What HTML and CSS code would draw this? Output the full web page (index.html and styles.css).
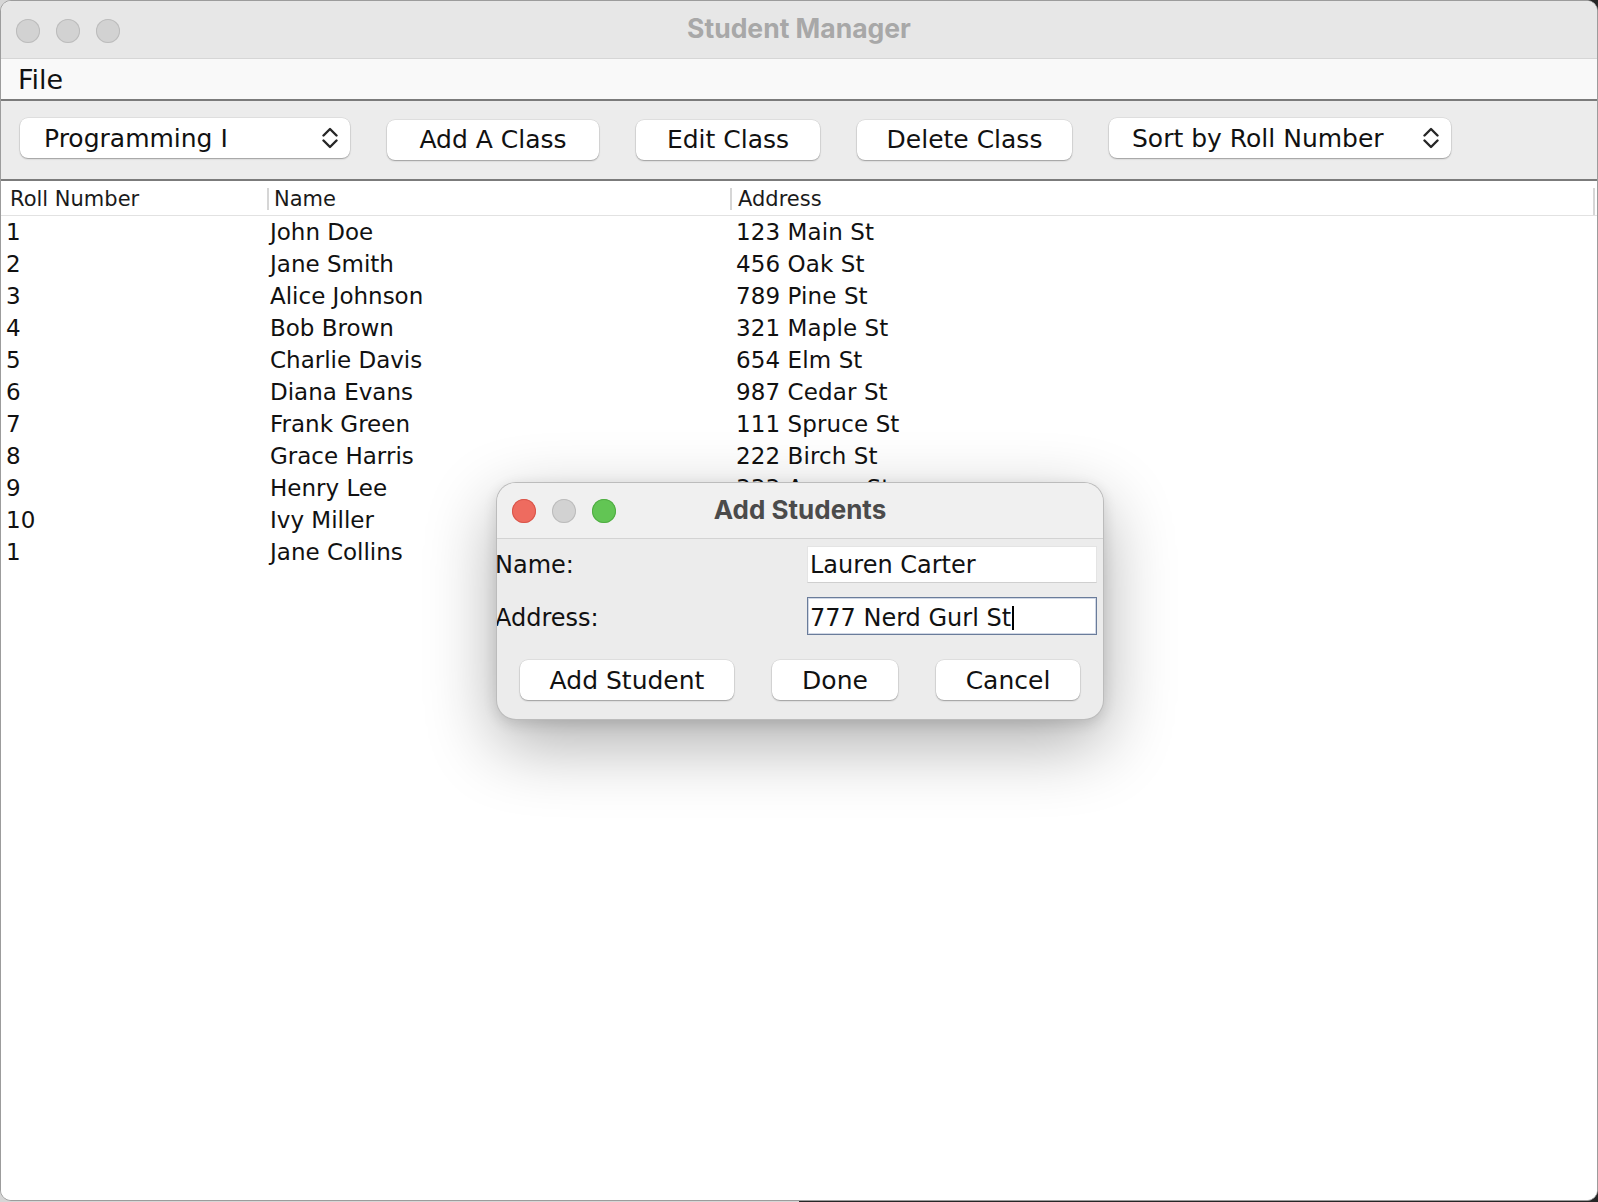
FILE: index.html
```html
<!DOCTYPE html>
<html>
<head>
<meta charset="utf-8">
<title>Student Manager</title>
<link rel="stylesheet" href="styles.css">
</head>
<body>
<div class="window">
  <div class="titlebar">
    <div class="lights">
      <span class="light"></span><span class="light"></span><span class="light"></span>
    </div>
    <div class="title">Student Manager</div>
    <div></div>
  </div>
  <div class="menubar"><span class="menu">File</span></div>
  <div class="toolbar">
    <div class="combo combo-class">
      <span>Programming I</span>
      <svg class="chev" width="16" height="22" viewBox="0 0 16 22"><path d="M1.5 8.5 L8 2 L14.5 8.5 M1.5 13.5 L8 20 L14.5 13.5" fill="none" stroke="#262626" stroke-width="2.4" stroke-linecap="round" stroke-linejoin="round"/></svg>
    </div>
    <div class="btn btn-addclass">Add A Class</div>
    <div class="btn btn-edit">Edit Class</div>
    <div class="btn btn-delete">Delete Class</div>
    <div class="combo combo-sort">
      <span>Sort by Roll Number</span>
      <svg class="chev" width="16" height="22" viewBox="0 0 16 22"><path d="M1.5 8.5 L8 2 L14.5 8.5 M1.5 13.5 L8 20 L14.5 13.5" fill="none" stroke="#262626" stroke-width="2.4" stroke-linecap="round" stroke-linejoin="round"/></svg>
    </div>
  </div>
  <div class="table">
    <div class="thead">
      <div class="th th-roll">Roll Number</div>
      <div class="th th-name">Name</div>
      <div class="th th-addr">Address</div>
    </div>
    <div class="tbody">
      <div class="tr"><div class="td td-roll">1</div><div class="td td-name">John Doe</div><div class="td td-addr">123 Main St</div></div>
      <div class="tr"><div class="td td-roll">2</div><div class="td td-name">Jane Smith</div><div class="td td-addr">456 Oak St</div></div>
      <div class="tr"><div class="td td-roll">3</div><div class="td td-name">Alice Johnson</div><div class="td td-addr">789 Pine St</div></div>
      <div class="tr"><div class="td td-roll">4</div><div class="td td-name">Bob Brown</div><div class="td td-addr">321 Maple St</div></div>
      <div class="tr"><div class="td td-roll">5</div><div class="td td-name">Charlie Davis</div><div class="td td-addr">654 Elm St</div></div>
      <div class="tr"><div class="td td-roll">6</div><div class="td td-name">Diana Evans</div><div class="td td-addr">987 Cedar St</div></div>
      <div class="tr"><div class="td td-roll">7</div><div class="td td-name">Frank Green</div><div class="td td-addr">111 Spruce St</div></div>
      <div class="tr"><div class="td td-roll">8</div><div class="td td-name">Grace Harris</div><div class="td td-addr">222 Birch St</div></div>
      <div class="tr"><div class="td td-roll">9</div><div class="td td-name">Henry Lee</div><div class="td td-addr">333 Aspen St</div></div>
      <div class="tr"><div class="td td-roll">10</div><div class="td td-name">Ivy Miller</div><div class="td td-addr">444 Walnut St</div></div>
      <div class="tr"><div class="td td-roll">1</div><div class="td td-name">Jane Collins</div><div class="td td-addr">555 Willow St</div></div>
    </div>
  </div>
</div>

<div class="dialog">
  <div class="dlg-titlebar">
    <div class="lights dlg-lights">
      <span class="light red"></span><span class="light"></span><span class="light green"></span>
    </div>
    <div class="dlg-title">Add Students</div>
    <div></div>
  </div>
  <div class="form">
    <div class="label">Name:</div>
    <div class="field">Lauren Carter</div>
    <div class="label label-addr">Address:</div>
    <div class="field focused">777 Nerd Gurl St<span class="caret"></span></div>
  </div>
  <div class="dlg-buttons">
    <div class="btn dbtn-add">Add Student</div>
    <div class="btn dbtn-done">Done</div>
    <div class="btn dbtn-cancel">Cancel</div>
  </div>
</div>
</body>
</html>
```

FILE: styles.css
```css
* { box-sizing: border-box; }
html, body { margin: 0; padding: 0; }
body {
  width: 1598px;
  height: 1202px;
  position: relative;
  overflow: hidden;
  background: linear-gradient(to right, #d6d6d6 0, #d6d6d6 50%, #262626 50%, #262626 100%);
  font-family: "DejaVu Sans", sans-serif;
  color: #111;
}

.window {
  width: 1598px;
  height: 1201px;
  border: 1px solid #9c9c9c;
  border-radius: 11px;
  overflow: hidden;
  background: #fff;
  display: flex;
  flex-direction: column;
}

.titlebar {
  height: 58px;
  flex: none;
  background: #e7e7e7;
  border-bottom: 1px solid #d6d6d6;
  display: grid;
  grid-template-columns: 1fr auto 1fr;
  align-items: center;
}
.lights { display: flex; gap: 16px; padding-left: 15px; padding-top: 2px; }
.light {
  width: 24px;
  height: 24px;
  border-radius: 50%;
  background: #d2d2d2;
  box-shadow: inset 0 0 0 1px #bcbcbc;
}
.light.red { background: #ee6b5f; box-shadow: inset 0 0 0 1px #d9564b; }
.light.green { background: #62c554; box-shadow: inset 0 0 0 1px #50ad43; }
.title {
  font-family: "Inter", "Roboto", sans-serif;
  font-weight: 700;
  font-size: 26.5px;
  color: #a8a8a8;
  padding-bottom: 3px;
}

.menubar {
  height: 42px;
  flex: none;
  background: #f9f9f9;
  border-bottom: 2px solid #7b7b7b;
  display: flex;
  align-items: center;
  padding: 1px 0 0 17px;
  font-size: 27px;
  color: #111;
}

.toolbar {
  height: 80px;
  flex: none;
  background: #ececec;
  border-bottom: 2px solid #7b7b7b;
  display: flex;
  align-items: flex-start;
  gap: 37px;
  padding: 17px 0 0 19px;
}
.combo {
  height: 40px;
  background: #fff;
  border-radius: 8px;
  box-shadow: 0 1px 1.5px rgba(0,0,0,0.3), 0 0 0 0.5px rgba(0,0,0,0.1);
  display: flex;
  align-items: center;
  justify-content: space-between;
  padding: 0 12px 0 24px;
  font-size: 25px;
  color: #111;
}
.combo-class { width: 330px; }
.combo-sort { width: 342px; padding-left: 23px; }
.chev { flex: none; }

.btn {
  height: 40px;
  background: #fff;
  border-radius: 8px;
  box-shadow: 0 1px 1.5px rgba(0,0,0,0.3), 0 0 0 0.5px rgba(0,0,0,0.1);
  display: flex;
  align-items: center;
  justify-content: center;
  font-size: 25px;
  color: #111;
}
.toolbar .btn { margin-top: 2px; padding-bottom: 2px; }
.btn-addclass { width: 212px; }
.btn-edit { width: 184px; }
.btn-delete { width: 215px; }

.table { flex: 1; background: #fff; }
.thead, .tr {
  display: grid;
  grid-template-columns: 266px 463px 1fr;
}
.thead {
  height: 35px;
  border-bottom: 1px solid #e2e2e2;
}
.th {
  font-size: 21px;
  line-height: 34px;
  padding: 1px 0 0 7px;
  color: #1a1a1a;
}
.th-roll { padding-left: 9px; }
.th-name {
  background: linear-gradient(#d6d6d6, #d6d6d6) left 7px / 2px 22px no-repeat;
}
.th-addr {
  margin-right: 2px;
  padding-left: 8px;
  background:
    linear-gradient(#d6d6d6, #d6d6d6) left 7px / 2px 22px no-repeat,
    linear-gradient(#d6d6d6, #d6d6d6) right 7px / 2px 27px no-repeat;
}

.tr { height: 32px; }
.td {
  font-size: 23px;
  line-height: 32px;
  white-space: nowrap;
  color: #111;
}
.td-roll { padding-left: 5px; }
.td-name { padding-left: 3px; }
.td-addr { padding-left: 6px; letter-spacing: 0.1px; }

.dialog {
  position: absolute;
  left: 496px;
  top: 482px;
  width: 608px;
  height: 238px;
  border: 1px solid rgba(0,0,0,0.2);
  border-radius: 20px;
  background: #ececec;
  box-shadow: 0 24px 70px rgba(0,0,0,0.32), 0 4px 14px rgba(0,0,0,0.12);
  overflow: hidden;
}
.dlg-titlebar {
  height: 56px;
  background: #f0f0f0;
  border-bottom: 1px solid #d3d3d3;
  display: grid;
  grid-template-columns: 1fr auto 1fr;
  align-items: center;
}
.dlg-lights { padding-top: 0; }
.dlg-title {
  font-family: "Inter", "Roboto", sans-serif;
  font-weight: 700;
  font-size: 26px;
  color: #4b4b4b;
  padding-bottom: 3px;
}
.form {
  display: grid;
  grid-template-columns: 310px 290px;
  grid-template-rows: 37px 38px;
  row-gap: 14px;
  padding-top: 7px;
  align-items: center;
  font-size: 24px;
}
.label { margin-left: -2px; color: #111; }
.label-addr { padding-top: 3px; }
.field {
  height: 100%;
  background: #fff;
  border: 1px solid #e4e4e4;
  border-bottom-color: #cfcfcf;
  padding-left: 2px;
  display: flex;
  align-items: center;
  color: #111;
  white-space: nowrap;
}
.field.focused {
  border: 1px solid #6a7c9a;
  box-shadow: inset 0 0 0 1px rgba(120,140,180,0.35);
  padding-top: 3px;
}
.caret {
  display: inline-block;
  width: 2px;
  height: 24px;
  background: #000;
  margin-left: 1px;
  align-self: center;
}
.dlg-buttons {
  display: flex;
  justify-content: center;
  gap: 38px;
  margin-top: 25px;
}
.dbtn-add { width: 214px; }
.dbtn-done { width: 126px; }
.dbtn-cancel { width: 144px; }
```
